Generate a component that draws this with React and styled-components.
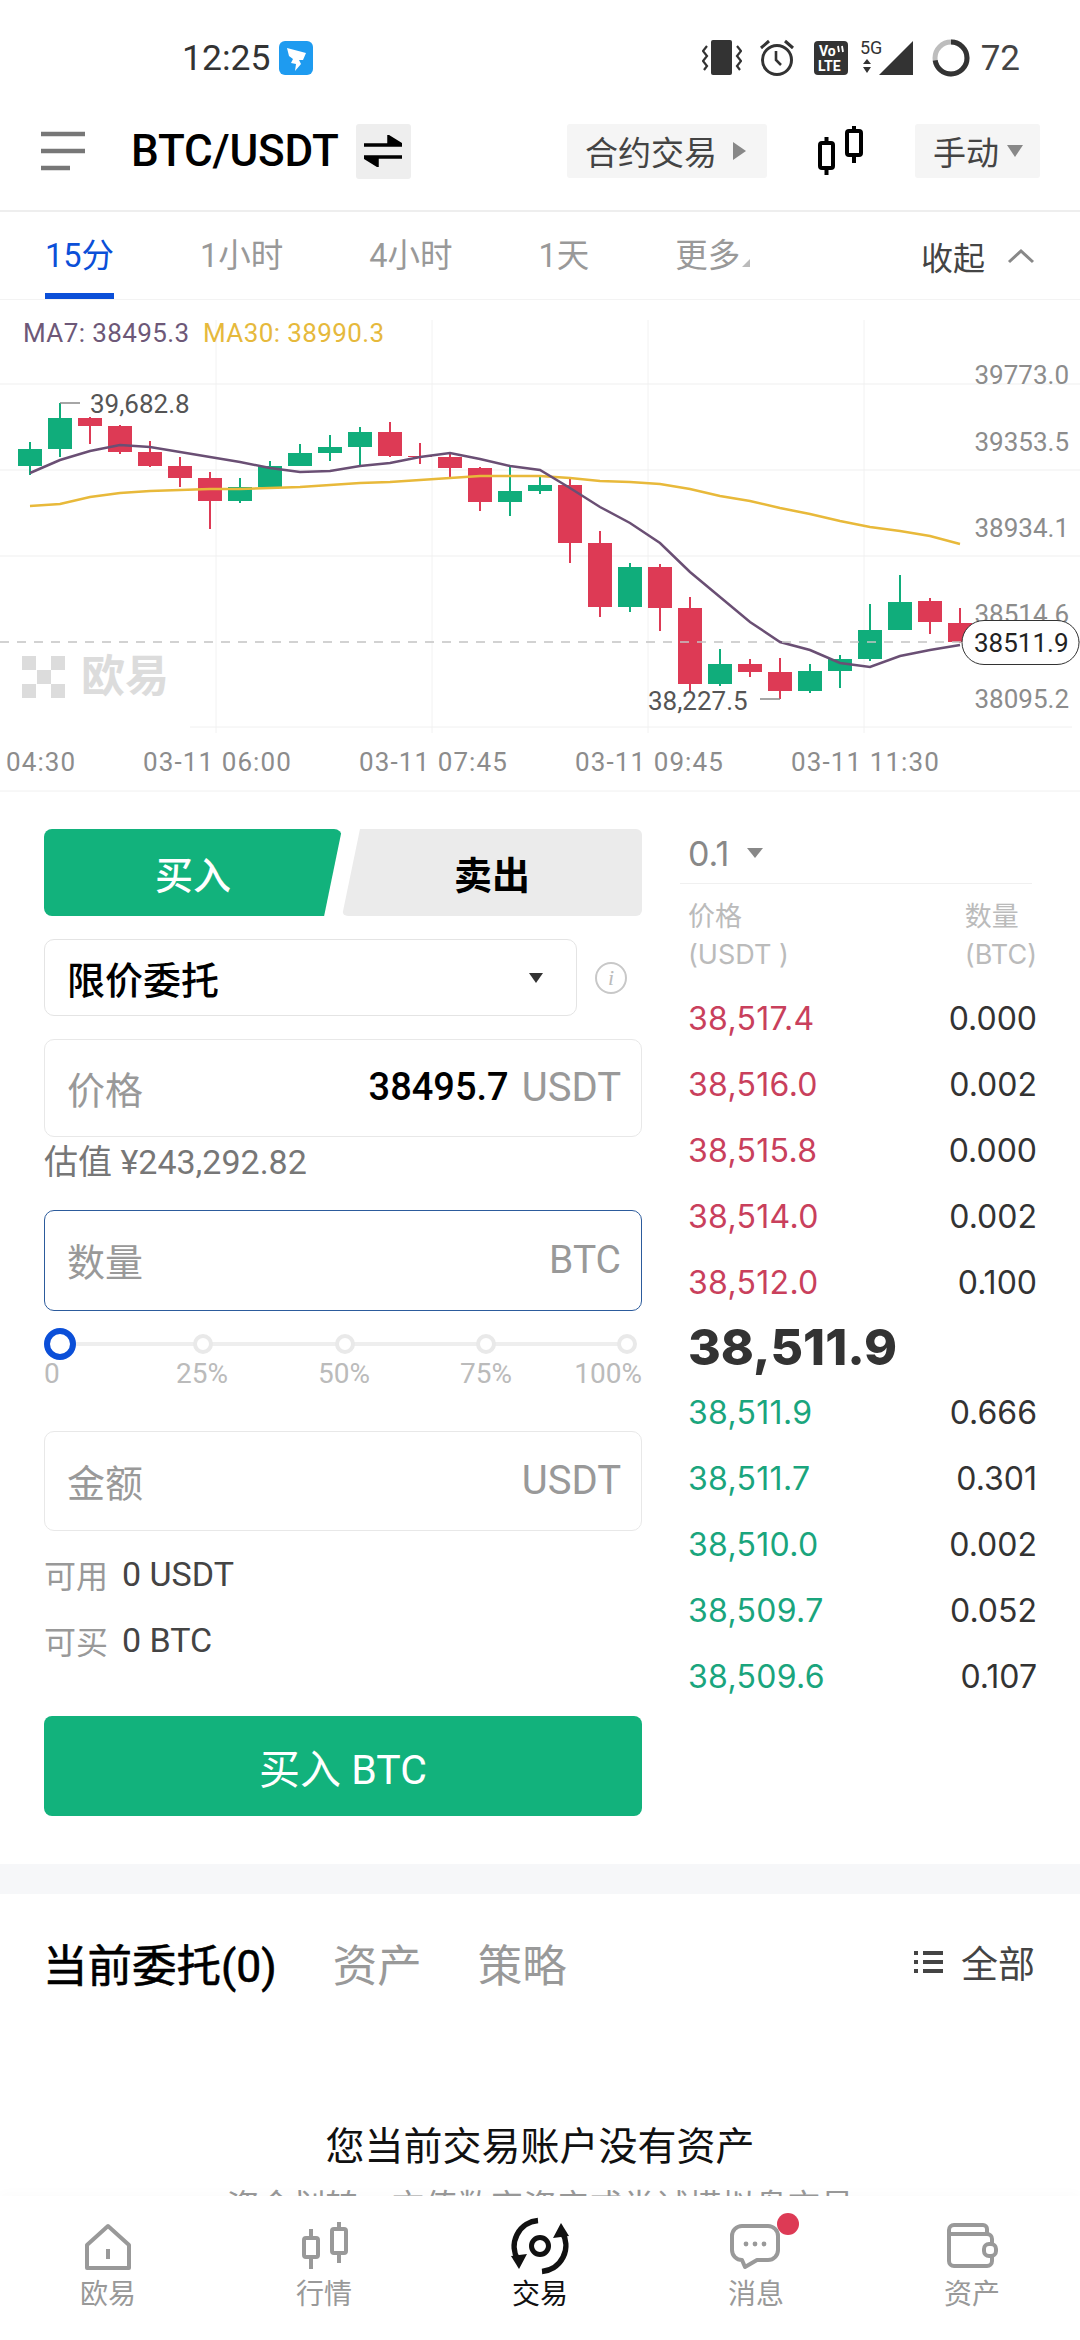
import React from 'react';
import styled, { createGlobalStyle } from 'styled-components';

const GREEN = '#12b27c';
const RED = '#dd3a55';
const BLUE = '#0b4fd8';
const SANS = 'Roboto, "Noto Sans CJK SC", sans-serif';

const GlobalStyle = createGlobalStyle`
  html, body { margin: 0; padding: 0; background: #fff; }
  * { box-sizing: border-box; }
`;

const Page = styled.div`
  position: relative;
  width: 1080px;
  height: 2340px;
  overflow: hidden;
  background: #fff;
  font-family: ${SANS};
`;

/* status bar */
const StatusBar = styled.div`
  height: 100px;
  display: flex;
  align-items: center;
  padding: 16px 60px 0 182px;
`;
const Clock = styled.span`
  font-size: 35.5px;
  color: #333;
  margin-right: 9px;
`;
const StatusRight = styled.div`
  margin-left: auto;
  display: flex;
  align-items: center;
`;
const Glyph = styled.svg`
  display: block;
  flex: none;
  margin-left: ${(p) => p.$ml || 0}px;
`;
const Battery = styled.span`
  font-size: 35px;
  color: #444;
  margin-left: 11px;
`;

/* title bar */
const NavBar = styled.div`
  height: 112px;
  display: flex;
  align-items: center;
  padding: 0 40px 8px 41px;
  border-bottom: 2px solid #eee;
`;
const Pair = styled.span`
  font-size: 44px;
  font-weight: 500;
  color: #000;
  margin: 0 17px 0 46px;
  letter-spacing: -0.2px;
`;
const SwapBtn = styled.div`
  width: 55px;
  height: 55px;
  background: #eee;
  border-radius: 3px;
  display: flex;
  align-items: center;
  justify-content: center;
`;
const GreyBtn = styled.div`
  height: 54px;
  width: ${(p) => p.$w}px;
  background: #f5f5f5;
  border-radius: 3px;
  display: flex;
  align-items: center;
  padding-left: 18px;
  gap: ${(p) => p.$gap}px;
  font-size: 33px;
  color: #444;
  margin-left: ${(p) => p.$ml};
`;
const Caret = styled.i`
  display: block;
  flex: none;
  width: 0;
  height: 0;
  border-left: ${(p) => p.$w / 2}px solid transparent;
  border-right: ${(p) => p.$w / 2}px solid transparent;
  border-top: ${(p) => p.$h}px solid ${(p) => p.$c};
`;
const RightCaret = styled.i`
  display: block;
  width: 0;
  height: 0;
  border-top: 9px solid transparent;
  border-bottom: 9px solid transparent;
  border-left: 13px solid #888;
`;

/* interval tabs */
const TabsBar = styled.div`
  height: 88px;
  display: flex;
  align-items: stretch;
  gap: 86px;
  padding: 0 45px;
  border-bottom: 1px solid #f3f3f3;
`;
const IntervalTab = styled.div`
  position: relative;
  display: flex;
  align-items: center;
  font-size: 32.5px;
  border-bottom: 6px solid ${(p) => (p.$active ? BLUE : 'transparent')};
  color: ${(p) => (p.$active ? BLUE : '#999')};
`;
const MoreMark = styled.i`
  position: absolute;
  right: -10px;
  bottom: 26px;
  width: 0;
  height: 0;
  border-left: 8px solid transparent;
  border-bottom: 8px solid #bbb;
`;
const Collapse = styled.div`
  margin-left: auto;
  display: flex;
  align-items: center;
  gap: 22px;
  font-size: 32px;
  color: #444;
`;

/* chart */
const ChartSvg = styled.svg`
  display: block;
  width: 1080px;
  height: 492px;
`;
const ChartText = styled.text`
  font-family: ${SANS};
  font-size: ${(p) => p.$size || 26}px;
  font-weight: ${(p) => p.$weight || 400};
  fill: ${(p) => p.$color};
  dominant-baseline: central;
`;

/* trade form */
const TradeArea = styled.div`
  height: 1072px;
  display: flex;
  padding: 37px 0 0 44px;
`;
const FormCol = styled.div`
  width: 598px;
  flex: none;
`;
const SideTabs = styled.div`
  display: flex;
  height: 87px;
`;
const BuyTab = styled.div`
  width: 298px;
  height: 87px;
  background: ${GREEN};
  color: #fff;
  border-radius: 8px;
  clip-path: polygon(0 0, 100% 0, 94% 100%, 0 100%);
  display: flex;
  align-items: center;
  justify-content: center;
  font-size: 38px;
  font-weight: 500;
`;
const SellTab = styled.div`
  width: 300px;
  height: 87px;
  background: #ebebeb;
  color: #000;
  border-radius: 6px;
  clip-path: polygon(6% 0, 100% 0, 100% 100%, 0 100%);
  display: flex;
  align-items: center;
  justify-content: center;
  font-size: 38px;
  font-weight: 700;
`;
const SelectRow = styled.div`
  display: flex;
  align-items: center;
  margin-top: 23px;
`;
const SelectBox = styled.div`
  width: 533px;
  height: 77px;
  border: 1.5px solid #e4e4e4;
  border-radius: 10px;
  display: flex;
  align-items: center;
  justify-content: space-between;
  padding: 0 33px 0 22px;
  font-size: 38px;
  font-weight: 500;
  color: #000;
`;
const InfoMark = styled.div`
  width: 32px;
  height: 32px;
  margin-left: 18px;
  border: 2.5px solid #c8c8c8;
  border-radius: 50%;
  display: flex;
  align-items: center;
  justify-content: center;
  font: italic 22px "Liberation Serif", serif;
  color: #bbb;
`;
const Field = styled.div`
  height: ${(p) => p.$h}px;
  margin-top: ${(p) => p.$mt}px;
  border: 1.5px solid ${(p) => (p.$focus ? '#2c5b9c' : '#e8e8e8')};
  border-radius: 10px;
  display: flex;
  align-items: center;
  padding: 0 20px 2px 22px;
  font-size: 38px;
  color: #999;
`;
const FieldValue = styled.span`
  margin-left: auto;
  margin-right: 13px;
  color: #000;
  font-weight: 500;
`;
const FieldUnit = styled.span`
  font-size: ${(p) => p.$size}px;
  margin-left: ${(p) => (p.$auto ? 'auto' : 0)};
`;
const Estimate = styled.div`
  height: 50px;
  line-height: 50px;
  font-size: 34px;
  color: #777;
`;
const Track = styled.div`
  position: relative;
  margin-top: 17px;
  height: 32px;
  padding-right: 5px;
  display: flex;
  align-items: center;
  justify-content: space-between;
  &::before {
    content: '';
    position: absolute;
    left: 10px;
    right: 8px;
    top: 14px;
    height: 4px;
    background: #eeeeee;
  }
`;
const Thumb = styled.i`
  position: relative;
  display: block;
  width: 32px;
  height: 32px;
  margin-right: -4px;
  border: 6px solid ${BLUE};
  border-radius: 50%;
  background: #fff;
`;
const Tick = styled.i`
  position: relative;
  display: block;
  width: 20px;
  height: 20px;
  border: 4px solid #e9e9e9;
  border-radius: 50%;
  background: #fff;
`;
const TickLabels = styled.div`
  display: grid;
  grid-template-columns: 87px 142px 142px 142px 85px;
  height: 30px;
  line-height: 28px;
  font-size: 28px;
  color: #bbb;
`;
const TickLabel = styled.span`
  text-align: ${(p) => p.$align || 'center'};
`;
const Balance = styled.div`
  height: 66px;
  display: flex;
  align-items: center;
  gap: 14px;
  font-size: 34px;
  color: #444;
`;
const BalanceName = styled.span`
  font-size: 32px;
  color: #999;
`;
const BalanceList = styled.div`
  margin-top: 10px;
`;
const SubmitBtn = styled.div`
  margin-top: 43px;
  height: 100px;
  background: ${GREEN};
  border-radius: 8px;
  color: #fff;
  font-size: 41px;
  display: flex;
  align-items: center;
  justify-content: center;
`;

/* order book */
const BookCol = styled.div`
  width: 349px;
  margin-left: 46px;
`;
const DepthRow = styled.div`
  height: 55px;
  margin-left: -8px;
  margin-right: 5px;
  padding: 0 0 6px 8px;
  display: flex;
  align-items: center;
  gap: 18px;
  font-family: Inter, sans-serif;
  font-size: 34px;
  color: #888;
  border-bottom: 1.5px solid #f0f0f0;
`;
const BookHead = styled.div`
  margin-top: 14px;
  display: flex;
  justify-content: space-between;
  font-size: 27px;
  line-height: 38px;
  color: #bbb;
  font-family: Inter, "Noto Sans CJK SC", sans-serif;
`;
const HeadRight = styled.div`
  text-align: left;
`;
const BookRows = styled.div`
  margin-top: 11px;
`;
const BookRow = styled.div`
  height: 66px;
  display: flex;
  align-items: center;
  justify-content: space-between;
  font-family: Inter, sans-serif;
  font-size: 32px;
  color: #333;
`;
const BookPrice = styled.span`
  letter-spacing: 0.3px;
  color: ${(p) => p.$color};
`;
const LastPrice = styled.div`
  height: 64px;
  display: flex;
  align-items: center;
  font-family: Inter, sans-serif;
  font-size: 50px;
  font-weight: 800;
  color: #333;
`;

/* orders */
const Band = styled.div`
  height: 30px;
  background: #f6f7f9;
`;
const OrderTabs = styled.div`
  height: 136px;
  display: flex;
  align-items: center;
  padding: 0 45px 0 43px;
  font-size: 44.5px;
  color: #999;
`;
const OrderTab = styled.span`
  margin-right: 56px;
  color: ${(p) => (p.$active ? '#000' : '#999')};
  -webkit-text-stroke: ${(p) => (p.$active ? '0.6px #000' : '0')};
`;
const FilterAll = styled.div`
  margin-left: auto;
  display: flex;
  align-items: center;
  gap: 18px;
  font-size: 37px;
  color: #444;
`;
const EmptyTitle = styled.div`
  margin-top: 87px;
  height: 60px;
  line-height: 60px;
  text-align: center;
  font-size: 39px;
  color: #111;
`;
const EmptyHint = styled.div`
  margin-top: 10px;
  text-align: center;
  font-size: 33px;
  line-height: 40px;
  color: #999;
`;

/* bottom bar */
const BottomNav = styled.div`
  position: absolute;
  left: 0;
  right: 0;
  bottom: 0;
  height: 144px;
  background: #fff;
  box-shadow: 0 -4px 10px rgba(0, 0, 0, 0.015);
  display: grid;
  grid-template-columns: repeat(5, 216px);
  padding-top: 18px;
`;
const NavItem = styled.div`
  display: flex;
  flex-direction: column;
  align-items: center;
  font-size: 28px;
  line-height: 34px;
  color: ${(p) => (p.$active ? '#111' : '#999')};
`;
const NavIconBox = styled.div`
  position: relative;
  width: 64px;
  height: 64px;
`;
const Badge = styled.i`
  position: absolute;
  left: 53px;
  top: -1px;
  width: 22px;
  height: 22px;
  border-radius: 50%;
  background: ${RED};
`;

// [x, wick top, body top, body bottom, wick bottom, up?]
const candles = [
  [30, 142, 149, 166, 175, 1], [60, 103, 118, 149, 157, 1], [90, 117, 118, 126, 144, 0],
  [120, 125, 126, 152, 154, 0], [150, 141, 152, 166, 167, 0], [180, 157, 166, 178, 187, 0],
  [210, 172, 178, 201, 229, 0], [240, 178, 187, 201, 203, 1], [270, 161, 166, 187, 188, 1],
  [300, 144, 153, 166, 166, 1], [330, 135, 147, 153, 161, 1], [360, 127, 132, 147, 166, 1],
  [390, 122, 132, 156, 157, 0], [420, 143, 156, 157, 164, 0], [450, 153, 157, 168, 178, 0],
  [480, 167, 168, 202, 211, 0], [510, 166, 191, 202, 216, 1], [540, 175, 185, 191, 194, 1],
  [570, 179, 185, 243, 263, 0], [600, 231, 243, 307, 317, 0], [630, 263, 267, 307, 312, 1],
  [660, 264, 267, 308, 331, 0], [690, 297, 308, 384, 393, 0], [720, 349, 364, 384, 386, 1],
  [750, 359, 364, 372, 377, 0], [780, 358, 372, 391, 399, 0], [810, 364, 371, 391, 393, 1],
  [840, 355, 359, 371, 388, 1], [870, 304, 330, 359, 361, 1], [900, 275, 302, 330, 330, 1],
  [930, 298, 301, 322, 334, 0], [960, 308, 323, 342, 343, 0],
];

const ma7 = '30,173 60,160 90,151 120,145 150,147 180,152 210,157 240,162 270,168 300,172 330,171 360,166 390,163 420,157 450,153 480,159 510,166 540,170 570,188 600,207 630,223 660,243 690,272 720,297 750,322 780,342 810,350 840,363 870,367 900,356 930,350 960,345';
const ma30 = '30,206 60,204 90,197 120,193 150,191 180,190 210,189 240,189 270,188 300,187 330,185 360,183 390,182 420,180 450,178 480,176 510,176 540,176 570,178 600,181 630,182 660,184 690,189 720,196 750,201 780,208 810,214 840,221 870,227 900,231 930,236 960,244';

const axisPrices = [
  ['39773.0', 75], ['39353.5', 142], ['38934.1', 228], ['38514.6', 314], ['38095.2', 399],
];
const axisTimes = [
  ['04:30', 6], ['03-11 06:00', 143], ['03-11 07:45', 359], ['03-11 09:45', 575], ['03-11 11:30', 791],
];

const asks = [
  ['38,517.4', '0.000'], ['38,516.0', '0.002'], ['38,515.8', '0.000'], ['38,514.0', '0.002'], ['38,512.0', '0.100'],
];
const bids = [
  ['38,511.9', '0.666'], ['38,511.7', '0.301'], ['38,510.0', '0.002'], ['38,509.7', '0.052'], ['38,509.6', '0.107'],
];

function KlineChart() {
  return (
    <ChartSvg viewBox="0 0 1080 492">
      {[216, 432, 648, 864].map((x) => (
        <line key={x} x1={x} x2={x} y1="20" y2="433" stroke="#f2f2f2" strokeWidth="1" />
      ))}
      {[84, 170, 256].map((y) => (
        <line key={y} x1="0" x2="1080" y1={y} y2={y} stroke="#efefef" strokeWidth="1" />
      ))}
      <line x1="190" x2="1072" y1="427" y2="427" stroke="#f0f0f0" strokeWidth="1" />
      <line x1="0" x2="1080" y1="491" y2="491" stroke="#f0f0f0" strokeWidth="1" />

      <ChartText x="23" y="33" letterSpacing="0.4" $color="#6d5878">MA7: 38495.3</ChartText>
      <ChartText x="203" y="33" letterSpacing="0.4" $color="#e6b93c">MA30: 38990.3</ChartText>

      {axisPrices.map(([label, y]) => (
        <ChartText key={label} x="1069" y={y} textAnchor="end" $color="#8c8c8c">{label}</ChartText>
      ))}
      {axisTimes.map(([label, x]) => (
        <ChartText key={label} x={x} y="462" letterSpacing="1.1" $color="#8c8c8c">{label}</ChartText>
      ))}

      {/* watermark */}
      <g fill="#dcdcdc">
        <rect x="22" y="356" width="14" height="14" />
        <rect x="51" y="356" width="14" height="14" />
        <rect x="37" y="370" width="14" height="14" />
        <rect x="22" y="384" width="14" height="14" />
        <rect x="51" y="384" width="14" height="14" />
      </g>
      <ChartText x="81" y="377" $size="44" $weight="700" $color="#dcdcdc">欧易</ChartText>

      {candles.map(([x, top, open, close, bottom, up]) => (
        <g key={x} fill={up ? '#10ad7b' : RED}>
          <rect x={x - 1} y={top} width="2" height={bottom - top} />
          <rect x={x - 12} y={open} width="24" height={Math.max(close - open, 1)} />
        </g>
      ))}

      <polyline points={ma30} fill="none" stroke="#e8b93a" strokeWidth="2.5" />
      <polyline points={ma7} fill="none" stroke="#6a4f74" strokeWidth="2.5" />

      <line x1="0" x2="1080" y1="342" y2="342" stroke="#c4c4c4" strokeWidth="1.5" strokeDasharray="9 8" />

      <path d="M60 103H80" stroke="#888" strokeWidth="1.5" />
      <ChartText x="90" y="104" $color="#555">39,682.8</ChartText>
      <path d="M760 399H780" stroke="#888" strokeWidth="1.5" />
      <ChartText x="648" y="401" $color="#555">38,227.5</ChartText>

      <rect x="962" y="320.5" width="117" height="44" rx="22" fill="#fff" stroke="#333" strokeWidth="1" />
      <ChartText x="974" y="343" $color="#222">38511.9</ChartText>
    </ChartSvg>
  );
}

function VibrateIcon() {
  return (
    <Glyph width="40" height="36" viewBox="0 0 40 36">
      <rect x="9" y="0" width="21" height="35" rx="2" fill="#333" />
      <path d="M5 6 1 11l4 5-4 5 4 5-3 4M35 6l4 5-4 5 4 5-4 5 3 4" fill="none" stroke="#333" strokeWidth="2.2" />
    </Glyph>
  );
}

function AlarmIcon() {
  return (
    <Glyph $ml="17" width="36" height="38" viewBox="0 0 36 38">
      <circle cx="18" cy="21" r="14.5" fill="none" stroke="#333" strokeWidth="3" />
      <path d="M17 12v9l5 5" fill="none" stroke="#333" strokeWidth="2.6" />
      <path d="M2 9 10 2M34 9 26 2" stroke="#333" strokeWidth="3" />
    </Glyph>
  );
}

function VolteIcon() {
  return (
    <Glyph $ml="19" width="34" height="34" viewBox="0 0 34 34">
      <rect width="34" height="34" rx="4" fill="#333" />
      <text x="5" y="15" fontFamily="Roboto, sans-serif" fontSize="14" fontWeight="700" fill="#fff">Vo</text>
      <path d="M24 5l1 6M28 5l1 6" stroke="#fff" strokeWidth="1.8" />
      <text x="4" y="30" fontFamily="Roboto, sans-serif" fontSize="14" fontWeight="700" fill="#fff">LTE</text>
    </Glyph>
  );
}

function SignalIcon() {
  return (
    <Glyph $ml="12" width="54" height="44" viewBox="0 0 54 44">
      <text x="0" y="18" fontFamily="Roboto, sans-serif" fontSize="18" fill="#333">5G</text>
      <path d="M7 23l4 5H3zM7 37l4-6H3z" fill="#333" />
      <path d="M19 39 53 5V39Z" fill="#333" />
    </Glyph>
  );
}

function BatteryRing() {
  return (
    <Glyph $ml="18" width="38" height="38" viewBox="0 0 38 38">
      <circle cx="19" cy="19" r="16" fill="none" stroke="#bdbdbd" strokeWidth="5" />
      <circle
        cx="19" cy="19" r="16" fill="none" stroke="#333" strokeWidth="5"
        strokeDasharray="72.4 100" transform="rotate(-90 19 19)"
      />
    </Glyph>
  );
}

function HomeIcon() {
  return (
    <svg width="64" height="64" viewBox="0 0 64 64">
      <path d="M32 12 53 31V54H11V31Z" fill="none" stroke="#999" strokeWidth="4" strokeLinejoin="round" />
      <path d="M32 35V45" stroke="#999" strokeWidth="4" />
    </svg>
  );
}

function MarketIcon() {
  return (
    <svg width="64" height="64" viewBox="0 0 64 64" fill="none" stroke="#999" strokeWidth="4">
      <rect x="12" y="24" width="14" height="19" rx="2" />
      <path d="M19 15V24M19 43V55" />
      <rect x="40" y="15" width="14" height="24" rx="2" />
      <path d="M47 8V15M47 39V49" />
    </svg>
  );
}

function TradeIcon() {
  return (
    <svg width="64" height="64" viewBox="0 0 64 64" fill="none" stroke="#111">
      <circle cx="32" cy="32" r="8.5" strokeWidth="5" />
      <path d="M30 6.5A26 26 0 0 0 10 46" strokeWidth="5.5" />
      <path d="M3 42 19 40 11 55Z" fill="#111" stroke="none" />
      <path d="M34 57.5A26 26 0 0 0 54 18" strokeWidth="5.5" />
      <path d="M61 22 45 24 53 9Z" fill="#111" stroke="none" />
    </svg>
  );
}

function MessageIcon() {
  return (
    <svg width="64" height="64" viewBox="0 0 64 64">
      <path
        d="M18 12H44A10 10 0 0 1 54 22V36A10 10 0 0 1 44 46H33L21 53 18 46A10 10 0 0 1 8 36V22A10 10 0 0 1 18 12Z"
        fill="none" stroke="#999" strokeWidth="4" strokeLinejoin="round"
      />
      <g fill="#999">
        <circle cx="22" cy="30" r="2.4" />
        <circle cx="31" cy="30" r="2.4" />
        <circle cx="40" cy="30" r="2.4" />
      </g>
    </svg>
  );
}

function WalletIcon() {
  return (
    <svg width="64" height="64" viewBox="0 0 64 64" fill="none" stroke="#999" strokeWidth="4">
      <path d="M9 20V16A5 5 0 0 1 14 11H43A4 4 0 0 1 47 15V20" />
      <path d="M9 18V47A5 5 0 0 0 14 52H47A5 5 0 0 0 52 47V25A5 5 0 0 0 47 20H9" />
      <rect x="44" y="30" width="12" height="12" rx="5" fill="#fff" />
    </svg>
  );
}

export default function App() {
  return (
    <Page>
      <GlobalStyle />

      <StatusBar>
        <Clock>12:25</Clock>
        <Glyph width="34" height="34" viewBox="0 0 34 34">
          <rect width="34" height="34" rx="6" fill="#1e9bf0" />
          <path d="M8 7 27 12 24 19 20 19 22 23 16 30 17 23 12 22 14 18 10 15Z" fill="#fff" />
        </Glyph>
        <StatusRight>
          <VibrateIcon />
          <AlarmIcon />
          <VolteIcon />
          <SignalIcon />
          <BatteryRing />
          <Battery>72</Battery>
        </StatusRight>
      </StatusBar>

      <NavBar>
        <Glyph width="44" height="40" viewBox="0 0 44 40">
          <path d="M0 3H44M0 20H44M0 37H29" stroke="#777" strokeWidth="4.5" />
        </Glyph>
        <Pair>BTC/USDT</Pair>
        <SwapBtn>
          <svg width="38" height="32" viewBox="0 0 38 32">
            <path d="M0 10H30M38 10 25 2V10ZM38 22H8M0 22 13 30V22Z" fill="#000" stroke="#000" strokeWidth="3.5" />
          </svg>
        </SwapBtn>
        <GreyBtn $w={200} $gap={16} $ml="auto">
          合约交易
          <RightCaret />
        </GreyBtn>
        <Glyph $ml="50" width="48" height="52" viewBox="0 0 48 52" fill="none" stroke="#000" strokeWidth="4">
          <rect x="3" y="18" width="13" height="25" rx="2" />
          <path d="M9.5 12V18M9.5 43V50" />
          <rect x="30" y="6" width="14" height="24" rx="2" />
          <path d="M37 1V6M37 30V38" />
        </Glyph>
        <GreyBtn $w={125} $gap={8} $ml="50px">
          手动
          <Caret $w={16} $h={12} $c="#888" />
        </GreyBtn>
      </NavBar>

      <TabsBar>
        <IntervalTab $active>15分</IntervalTab>
        <IntervalTab>1小时</IntervalTab>
        <IntervalTab>4小时</IntervalTab>
        <IntervalTab>1天</IntervalTab>
        <IntervalTab>
          更多
          <MoreMark />
        </IntervalTab>
        <Collapse>
          收起
          <svg width="28" height="16" viewBox="0 0 28 16">
            <path d="M2 14 14 3 26 14" fill="none" stroke="#888" strokeWidth="3" />
          </svg>
        </Collapse>
      </TabsBar>

      <KlineChart />

      <TradeArea>
        <FormCol>
          <SideTabs>
            <BuyTab>买入</BuyTab>
            <SellTab>卖出</SellTab>
          </SideTabs>
          <SelectRow>
            <SelectBox>
              限价委托
              <Caret $w={15} $h={10} $c="#333" />
            </SelectBox>
            <InfoMark>i</InfoMark>
          </SelectRow>
          <Field $h={98} $mt={23}>
            价格
            <FieldValue>38495.7</FieldValue>
            <FieldUnit $size={40}>USDT</FieldUnit>
          </Field>
          <Estimate>估值 ¥243,292.82</Estimate>
          <Field $h={101} $mt={23} $focus>
            数量
            <FieldUnit $auto $size={39}>BTC</FieldUnit>
          </Field>
          <Track>
            <Thumb />
            <Tick />
            <Tick />
            <Tick />
            <Tick />
          </Track>
          <TickLabels>
            <TickLabel $align="left">0</TickLabel>
            <TickLabel>25%</TickLabel>
            <TickLabel>50%</TickLabel>
            <TickLabel>75%</TickLabel>
            <TickLabel $align="right">100%</TickLabel>
          </TickLabels>
          <Field $h={100} $mt={41}>
            金额
            <FieldUnit $auto $size={40}>USDT</FieldUnit>
          </Field>
          <BalanceList>
            <Balance>
              <BalanceName>可用</BalanceName>
              0 USDT
            </Balance>
            <Balance>
              <BalanceName>可买</BalanceName>
              0 BTC
            </Balance>
          </BalanceList>
          <SubmitBtn>买入 BTC</SubmitBtn>
        </FormCol>

        <BookCol>
          <DepthRow>
            0.1
            <Caret $w={16} $h={10} $c="#888" />
          </DepthRow>
          <BookHead>
            <div>价格<br />(USDT )</div>
            <HeadRight>数量<br />(BTC)</HeadRight>
          </BookHead>
          <BookRows>
            {asks.map(([price, qty]) => (
              <BookRow key={price}>
                <BookPrice $color="#c9405c">{price}</BookPrice>
                {qty}
              </BookRow>
            ))}
            <LastPrice>38,511.9</LastPrice>
            {bids.map(([price, qty]) => (
              <BookRow key={price}>
                <BookPrice $color="#1aa57d">{price}</BookPrice>
                {qty}
              </BookRow>
            ))}
          </BookRows>
        </BookCol>
      </TradeArea>

      <Band />

      <OrderTabs>
        <OrderTab $active>当前委托(0)</OrderTab>
        <OrderTab>资产</OrderTab>
        <OrderTab>策略</OrderTab>
        <FilterAll>
          <svg width="29" height="24" viewBox="0 0 29 24" fill="#444">
            <path d="M0 1H4V5H0ZM9 1H29V5H9ZM0 10H4V14H0ZM9 10H29V14H9ZM0 19H4V23H0ZM9 19H29V23H9Z" />
          </svg>
          全部
        </FilterAll>
      </OrderTabs>

      <EmptyTitle>您当前交易账户没有资产</EmptyTitle>
      <EmptyHint>资金划转，充值数字资产或尝试模拟盘交易</EmptyHint>

      <BottomNav>
        <NavItem>
          <NavIconBox><HomeIcon /></NavIconBox>
          欧易
        </NavItem>
        <NavItem>
          <NavIconBox><MarketIcon /></NavIconBox>
          行情
        </NavItem>
        <NavItem $active>
          <NavIconBox><TradeIcon /></NavIconBox>
          交易
        </NavItem>
        <NavItem>
          <NavIconBox>
            <MessageIcon />
            <Badge />
          </NavIconBox>
          消息
        </NavItem>
        <NavItem>
          <NavIconBox><WalletIcon /></NavIconBox>
          资产
        </NavItem>
      </BottomNav>
    </Page>
  );
}
